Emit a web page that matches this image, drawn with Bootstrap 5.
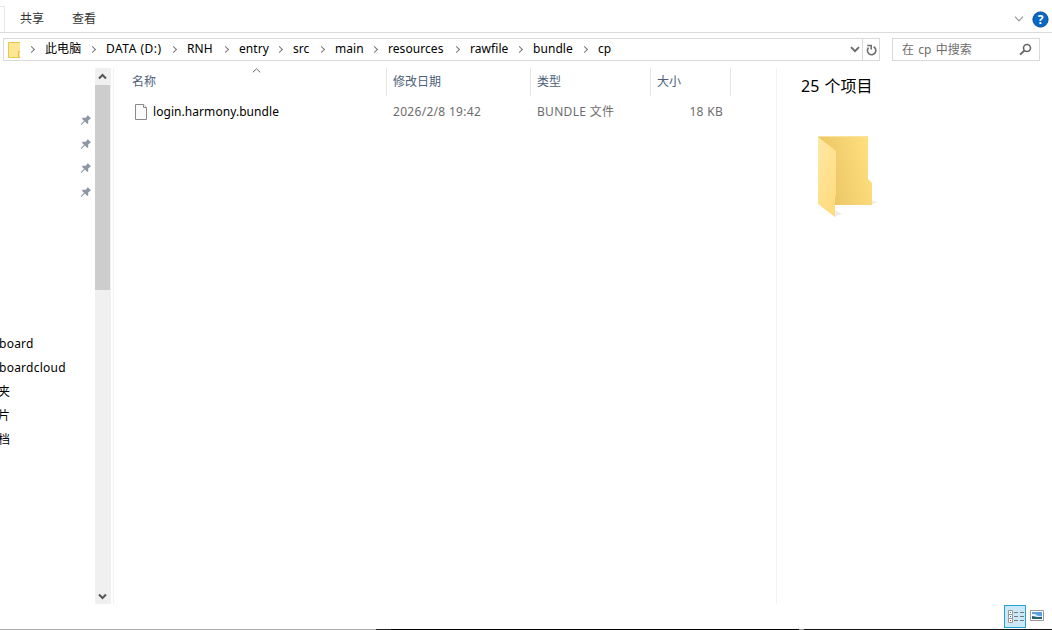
<!DOCTYPE html>
<html lang="zh-CN">
<head>
<meta charset="utf-8">
<meta name="viewport" content="width=device-width, initial-scale=1">
<title>cp</title>
<link href="https://cdn.jsdelivr.net/npm/bootstrap@5.3.0/dist/css/bootstrap.min.css" rel="stylesheet">
<style>
body{font:12px/16px "Noto Sans","Noto Sans CJK SC",sans-serif;color:#000;background:#fff;overflow:hidden}
svg{display:block;flex:none}
.window{width:1052px;height:630px}
.ribbon{height:33px;border-bottom:1px solid #dadbdc;padding:6px 3px 0 0;color:#333}
.file-edge{width:5px;height:26px;border:1px solid #e6e7e8;border-width:1px 1px 0 0;align-self:flex-start}
.tab-label{margin-left:28px}
.tab-label.first{margin-left:15px}
.address-row{height:35px;padding:5px 12px 7px 3px}
.address{width:877px;border:1px solid #d9d9d9}
.crumbs{display:grid;grid-template-columns:61px 81px 52px 54px 42px 53px 82px 63px 65px 30px;list-style:none;white-space:nowrap;margin:0 0 2px 25px;padding:0}
.crumbs li{position:relative;letter-spacing:.07px}
.crumbs li::before{content:"";position:absolute;left:-16px;top:6px;width:5px;height:5px;border:solid #777;border-width:1.6px 1.6px 0 0;transform:rotate(45deg)}
.crumbs .drive{letter-spacing:.5px}
.refresh{width:17px;border-left:1px solid #d9d9d9;padding-left:1px}
.search{width:148px;border:1px solid #d9d9d9;color:#6d6d6d;padding:0 7px 0 9px;word-spacing:1.2px}
.main-area{height:536px}
.sidebar{width:95px;padding-top:40px}
.sidebar .item{height:24px;padding-top:4px;white-space:nowrap;letter-spacing:.15px}
.sidebar .latin{margin-left:-1px;letter-spacing:.25px}
.sidebar .clipped{margin-left:-2px}
.sidebar .pinned{padding:6px 0 0 80px}
.gap-items{height:128px}
.scroll{width:16px;background:#f0f0f0}
.thumb{width:15px;height:205px;background:#cdcdcd}
.files{width:664px;margin-left:2px;border-left:1px solid #f3f3f3;border-right:1px solid #f3f3f3}
.cols{display:grid;grid-template-columns:273px 144px 120px 80px}
.heads{height:28px;color:#4c607a}
.heads>div{border-right:1px solid #e5e5e5;padding:6px 0 0 6px}
.file{height:32px;color:#6d6d6d;padding-top:8px}
.file>div{padding-left:6px;white-space:nowrap;letter-spacing:.3px}
.heads>div:first-child,.file>div:first-child{padding-left:18px}
.file>div:first-child{letter-spacing:.06px}
.sort{position:absolute;left:138px;top:0}
.preview{padding:7px 0 0 24px}
.preview h1{font-size:16px;line-height:22px;margin:0 0 37px;font-weight:400;word-spacing:1px}
.preview .folder{margin-left:16px}
.status{height:25px;padding:1px 8px 0 0}
.details{width:22px;height:23px;border:1px solid #26a0da;background:#cce8f6}
.pictures{margin:5px 0 0 4px}
.taskbar{height:1px;background:linear-gradient(90deg,#aaa 376px,#222 376px 391px,#000 391px 799px,#999 799px 804px,#111 804px)}
</style>
</head>
<body>
<div class="window d-flex flex-column">
  <nav class="ribbon d-flex align-items-center">
    <div class="file-edge"></div>
    <span class="tab-label first">共享</span><span class="tab-label">查看</span>
    <svg class="ms-auto" width="10" height="6" viewBox="0 0 10 6" fill="none" stroke="#999" stroke-width="1.2"><path d="M1 .7 5 4.8 9 .7"/></svg>
    <svg class="ms-2" width="17" height="17" viewBox="0 0 17 17"><circle cx="8.5" cy="8.5" r="7.6" fill="#0868c4" stroke="#084d91"/><text x="8.5" y="13" text-anchor="middle" fill="#fff" font-size="12" font-weight="700">?</text></svg>
  </nav>
  <div class="address-row d-flex justify-content-between">
    <div class="address d-flex align-items-center">
      <svg width="16" height="18" viewBox="0 0 16 18"><path d="M4.5 1.5h12v15h-12z" fill="#ffe694" stroke="#ecc849"/><path d="M14.5 10.5h2v6h-2z" fill="#ffe694" stroke="#e8bd35"/></svg>
      <ol class="crumbs"><li>此电脑</li><li class="drive">DATA (D:)</li><li>RNH</li><li>entry</li><li>src</li><li>main</li><li>resources</li><li>rawfile</li><li>bundle</li><li>cp</li></ol>
      <svg class="ms-auto" style="margin-right:2px" width="10" height="7" viewBox="0 0 10 7" fill="none" stroke="#666" stroke-width="1.8"><path d="M1 1.2 5 5.2 9 1.2"/></svg>
      <div class="refresh h-100 d-flex align-items-center justify-content-center"><svg width="11" height="12" viewBox="0 0 11 12" fill="none" stroke="#707070" stroke-width="1.6"><path d="M7.6 2.8A4.2 4.2 0 1 1 2.6 3.6M1.2 1.5h4v4"/></svg></div>
    </div>
    <div class="search d-flex align-items-center justify-content-between"><span>在 cp 中搜索</span>
      <svg width="13" height="13" viewBox="0 0 13 13" fill="none" stroke="#666"><circle cx="8" cy="5" r="3.5" stroke-width="1.6"/><path d="m5.3 7.6-4.2 4" stroke-width="2"/></svg></div>
  </div>
  <main class="main-area d-flex">
    <aside class="sidebar">
      <div class="item pinned"><svg width="12" height="12" viewBox="0 0 12 12" fill="#8b98a3"><path id="pin" d="m7.5 1 3.7 3.6-1.3.3-1.8 1.8.2 2.7-1 .6-2.4-2.4-3.5 3.3-.7-.7L4 6.8 1.9 4.5l.8-.8 2.7.1 1.8-1.6z"/></svg></div>
      <div class="item pinned"><svg width="12" height="12" fill="#8b98a3"><use href="#pin"/></svg></div>
      <div class="item pinned"><svg width="12" height="12" fill="#8b98a3"><use href="#pin"/></svg></div>
      <div class="item pinned"><svg width="12" height="12" fill="#8b98a3"><use href="#pin"/></svg></div>
      <div class="gap-items"></div>
      <div class="item latin">board</div><div class="item latin">boardcloud</div>
      <div class="item clipped">夹</div><div class="item clipped">片</div><div class="item clipped">档</div>
    </aside>
    <div class="scroll d-flex flex-column">
      <svg width="16" height="17" fill="none" stroke="#555" stroke-width="2"><path d="m4 10.5 3.5-3.5L11 10.5"/></svg>
      <div class="thumb"></div>
      <svg class="mt-auto" width="16" height="17" fill="none" stroke="#555" stroke-width="2"><path d="m4 7.5 3.5 3.5L11 7.5"/></svg>
    </div>
    <section class="files">
      <div class="cols heads position-relative"><div>名称</div><div>修改日期</div><div>类型</div><div>大小</div>
        <svg class="sort" width="9" height="5" fill="none" stroke="#666"><path d="M.8 4.4 4.5.8 8.2 4.4"/></svg></div>
      <div class="cols file"><div class="d-flex text-black"><svg class="me-1" width="17" height="16" viewBox="0 0 17 16"><path d="M3.5.5h8l3 3v12h-11z" fill="#fafafa" stroke="#898989"/><path d="M11.5.5v3h3" fill="#fff" stroke="#898989"/></svg><span>login.harmony.bundle</span></div><div>2026/2/8 19:42</div><div>BUNDLE 文件</div><div class="text-end pe-2">18 KB</div></div>
    </section>
    <aside class="preview">
      <h1>25 个项目</h1>
      <svg class="folder" width="62" height="86" viewBox="0 0 62 86">
        <defs><linearGradient id="back" x1="0" y1=".65" x2="1" y2=".35"><stop stop-color="#e7c160"/><stop offset="1" stop-color="#ffdf7f"/></linearGradient><linearGradient id="front" x2=".5" y2="1"><stop stop-color="#ffe8a5"/><stop offset="1" stop-color="#ffdc80"/></linearGradient></defs>
        <path d="m17 83 8-3-7-4zm36-12 8-3-7-2z" fill="#eee"/>
        <path d="M1 2h50v43l4 4v22H18z" fill="url(#back)"/><path d="M1 2.5h50" stroke="#f8e3a0"/><path d="m1 3 18 14v44l-1 2v20L1 70z" fill="url(#front)"/>
      </svg>
    </aside>
  </main>
  <footer class="status d-flex justify-content-end">
    <div class="details"><svg width="20" height="21" viewBox="0 0 20 21"><path d="M3.5 4.5h4v4h-4zm0 4h4v4h-4zm0 4h4v4h-4z" fill="#fff" stroke="#999"/><path d="M9 6.5h4m2 0h4m-10 4h4m2 0h4m-10 4h4m2 0h4" stroke="#777"/><path d="M5 6h1v1H5z" fill="#398"/><path d="M5 10h1v1H5z" fill="#06f"/><path d="M5 14h1v1H5z" fill="#e20"/></svg></div>
    <svg class="pictures" width="14" height="12" viewBox="0 0 14 12"><path d="M.5.5h13v10H.5z" fill="#fff" stroke="#999"/><path d="M2 2h10v7H2z" fill="#5aa0e4"/><path d="M2 4h3l2 1.5 5 1V7H2z" fill="#e8f3fc"/><path d="m2 6 3 .5L7 7h5v2H2z" fill="#276070"/></svg>
  </footer>
  <div class="taskbar"></div>
</div>
<script src="https://cdn.jsdelivr.net/npm/bootstrap@5.3.0/dist/js/bootstrap.bundle.min.js"></script>
</body>
</html>
